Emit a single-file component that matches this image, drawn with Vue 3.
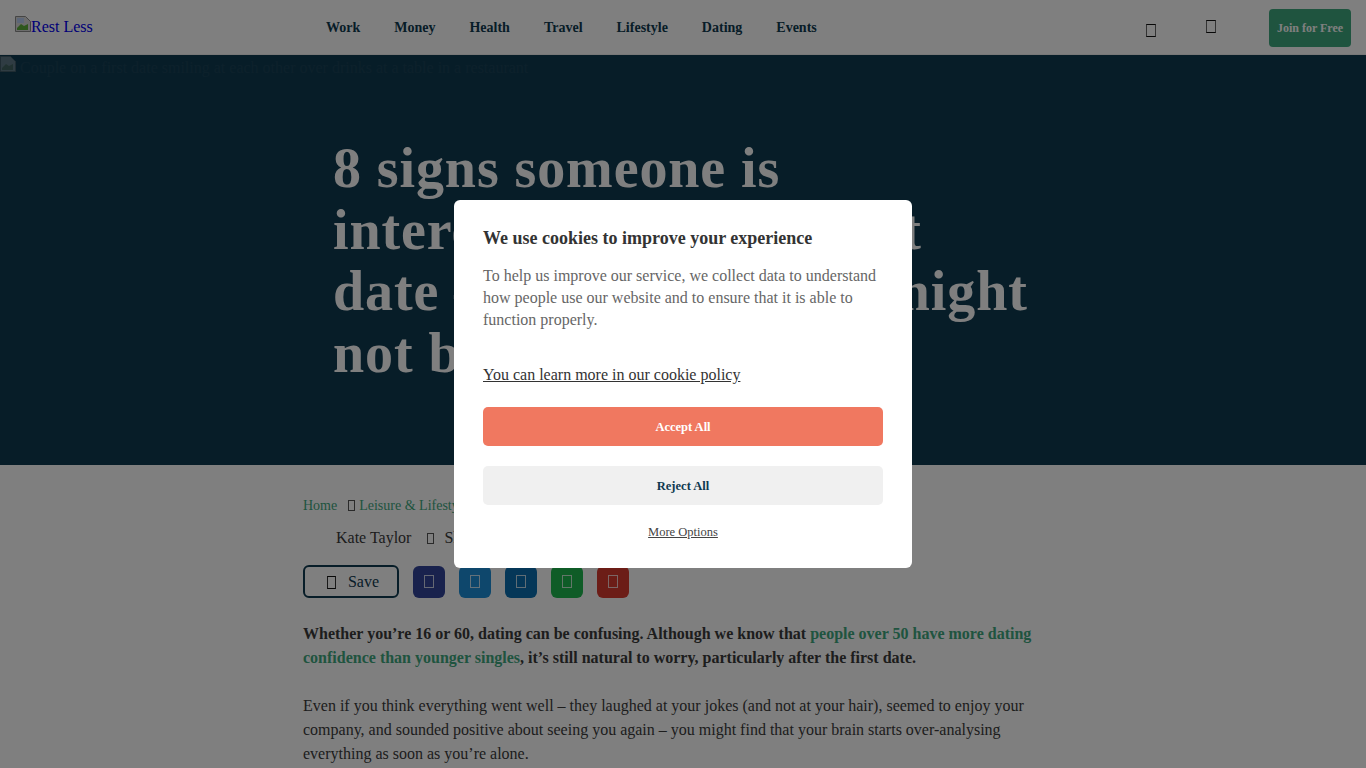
<script setup>
const navItems = ['Work', 'Money', 'Health', 'Travel', 'Lifestyle', 'Dating', 'Events']
const shares = ['#33449a', '#1d8fd8', '#0a6fb0', '#1fb84f', '#d93a2f']
</script>

<template>
  <div class="page">
    <header class="header">
      <a class="logo" href="#">
        <svg class="broken" width="16" height="16" viewBox="0 0 16 16">
          <path d="M.5.5h10l5 5v10H.5z" fill="#d8d8d8" stroke="#8a8a8a" />
          <path d="M2 2h7v5H2z" fill="#b9cdf0" />
          <path d="M2 12l4-4 3 2 4-2v6H2z" fill="#5cae3a" />
        </svg>Rest Less
      </a>
      <nav class="nav">
        <a v-for="item in navItems" :key="item" href="#">{{ item }}</a>
      </nav>
      <div class="tools">
        <span class="slot low"><i class="tofu"></i></span>
        <span class="slot"><i class="tofu"></i></span>
        <button class="join">Join for Free</button>
      </div>
    </header>

    <section class="hero">
      <div class="alt">
        <svg class="alt-icon" width="16" height="16" viewBox="0 0 16 16">
          <path d="M.5.5h10l5 5v10H.5z" fill="#d8d8d8" stroke="#8a8a8a" />
          <path d="M2 12l4-4 3 2 4-2v6H2z" fill="#8aa078" />
        </svg>
        <span class="alt-text">Couple on a first date smiling at each other over drinks at a table in a restaurant</span>
      </div>
      <h1>8 signs someone is interested after the first date – plus when they might not be</h1>
    </section>

    <main class="article">
      <div class="crumbs">
        <a href="#">Home</a><i class="tofu small sep"></i><a href="#">Leisure &amp; Lifestyle</a>
      </div>
      <div class="meta">
        <span>Kate Taylor</span><i class="tofu small sep2"></i><span>Share</span>
      </div>
      <div class="actions">
        <button class="save"><i class="tofu save-icon"></i><span>Save</span></button>
        <a v-for="c in shares" :key="c" class="share" href="#" :style="{ background: c }"><i class="tofu light"></i></a>
      </div>
      <p class="lead">Whether you’re 16 or 60, dating can be confusing. Although we know that <a href="#">people over 50 have more dating confidence than younger singles</a>, it’s still natural to worry, particularly after the first date.</p>
      <p>Even if you think everything went well – they laughed at your jokes (and not at your hair), seemed to enjoy your company, and sounded positive about seeing you again – you might find that your brain starts over-analysing everything as soon as you’re alone.</p>
    </main>

    <div class="overlay">
      <div class="modal">
        <h2>We use cookies to improve your experience</h2>
        <p class="desc">To help us improve our service, we collect data to understand how people use our website and to ensure that it is able to function properly.</p>
        <a class="policy" href="#">You can learn more in our cookie policy</a>
        <button class="accept">Accept All</button>
        <button class="reject">Reject All</button>
        <a class="more" href="#">More Options</a>
      </div>
    </div>
  </div>
</template>

<style>
html, body { margin: 0; overflow: hidden; }
</style>

<style scoped>
.page {
  height: 768px;
  overflow: hidden;
  font-family: "Liberation Serif", serif;
  font-size: 16px;
  color: #3a3a3a;
  background: #fff;
}
a { text-decoration: none; }
.header {
  height: 55px;
  box-sizing: border-box;
  border-bottom: 1px solid #f0f0f0;
  display: flex;
  align-items: center;
  padding: 1px 15px 0;
}
.logo { color: #0000ee; display: flex; align-items: center; width: 293px; margin-top: -2px; }
.broken { margin-top: -6px; }
.nav { display: flex; gap: 34px; font-weight: 700; font-size: 14px; margin-left: 18px; }
.nav a { color: #0f3a50; }
.tools { margin-left: auto; display: flex; align-items: center; }
.tofu {
  display: inline-block;
  box-sizing: border-box;
  width: 10px;
  height: 13px;
  border: 1px solid #666;
  border-top-color: #111;
  border-bottom-color: #111;
}
.tofu.small { width: 7px; height: 11px; vertical-align: -1px; border-color: #555; }
.slot { width: 60px; display: flex; }
.slot .tofu { margin-top: -3px; }
.slot.low .tofu { margin-top: 5px; }
.join {
  margin-left: 3px;
  width: 82px;
  height: 38px;
  border: 0;
  border-radius: 4px;
  background: #3fa87f;
  color: #fff;
  font: 700 12px "Liberation Serif", serif;
  padding: 1px 0 0;
}
.hero { height: 410px; background: #0f3a50; position: relative; }
.alt { display: flex; height: 16px; white-space: nowrap; padding-top: 1px; }
.alt-icon { opacity: 0.4; }
.alt-text { color: #fff; opacity: 0.04; font-size: 16px; line-height: 24px; margin-left: 4px; }
.hero h1 {
  margin: 0;
  position: absolute;
  left: 333px;
  top: 83px;
  width: 700px;
  color: #fff;
  font-size: 56px;
  line-height: 61.6px;
  font-weight: 700;
  letter-spacing: 0.9px;
}
.article { margin-left: 303px; width: 732px; padding-top: 31px; }
.crumbs { color: #3fa87f; font-size: 14px; line-height: 20px; }
.crumbs a { color: #3fa87f; }
.sep { margin: 0 4px 0 11px; border-color: #2a7a5c; }
.meta { margin-top: 12px; padding-left: 33px; line-height: 20px; }
.sep2 { margin: 0 10px 0 16px; }
.actions { margin-top: 17px; display: flex; align-items: center; }
.save {
  width: 96px;
  height: 33px;
  box-sizing: border-box;
  background: transparent;
  border: 2px solid #0f3a50;
  border-radius: 6px;
  font: 16px "Liberation Serif", serif;
  color: #0f3a50;
  display: flex;
  align-items: center;
  justify-content: center;
  gap: 12px;
  margin-right: 14px;
  padding: 1px 0 0 4px;
}
.save-icon { border-color: #333; border-top-color: #111; border-bottom-color: #111; width: 9px; }
.share {
  width: 32px;
  height: 32px;
  border-radius: 6px;
  margin-right: 14px;
  display: flex;
  align-items: center;
  justify-content: center;
}
.tofu.light { border-color: rgba(255, 255, 255, 0.75); }
.article p { margin: 0 0 24px; line-height: 24px; }
.article .lead { margin-top: 24px; font-weight: 700; }
.lead a { color: #3fa87f; }
.overlay {
  position: fixed;
  inset: 0;
  background: rgba(0, 0, 0, 0.5);
  display: flex;
  align-items: center;
  justify-content: center;
  z-index: 10;
}
.modal {
  width: 458px;
  height: 368px;
  box-sizing: border-box;
  background: #fff;
  border-radius: 6px;
  padding: 28px 29px 0;
  display: flex;
  flex-direction: column;
  align-items: stretch;
}
.modal h2 { margin: 0; font-size: 18px; line-height: 20px; color: #333; font-weight: 700; }
.desc { margin: 17px 0 0; line-height: 22px; font-size: 16px; color: #666; }
.policy { margin-top: 33px; line-height: 22px; color: #333; text-decoration: underline; font-size: 16px; }
.accept, .reject {
  height: 39px;
  border: 0;
  border-radius: 5px;
  font: 700 12.5px "Liberation Serif", serif;
  padding: 2px 0 0;
}
.accept { margin-top: 21px; background: #f07860; color: #fff; }
.reject { margin-top: 20px; background: #f0f0f0; color: #0f3a50; }
.more { margin-top: 19px; text-align: center; font-size: 12.5px; line-height: 16px; color: #444; text-decoration: underline; }
</style>
